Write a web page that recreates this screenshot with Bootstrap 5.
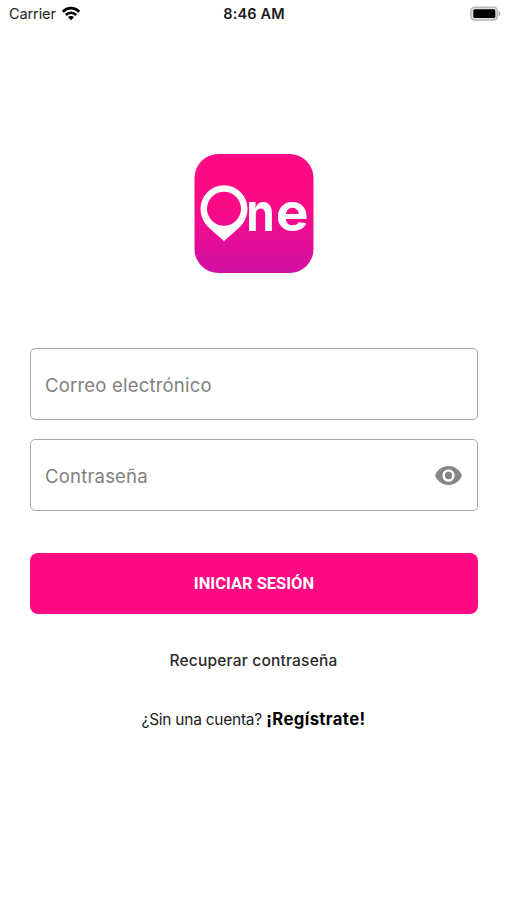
<!DOCTYPE html>
<html lang="es">
<head>
<meta charset="utf-8">
<meta name="viewport" content="width=device-width, initial-scale=1">
<title>Iniciar sesión</title>
<link href="https://cdn.jsdelivr.net/npm/bootstrap@5.3.0/dist/css/bootstrap.min.css" rel="stylesheet">
<style>
body{font-family:Inter,"Liberation Sans",sans-serif;background:#fff;color:#222;min-height:900px}
.status{height:28px;padding:0 6px 0 9px;line-height:28px;font-size:14.5px}
.status>div{flex:1 1 0}
.carrier{letter-spacing:-.1px}
.clock{font-weight:600;font-size:14.5px;color:#1a1a1a;letter-spacing:.15px;padding-right:2px}
.logo{margin-top:126px;height:119px}
.login{margin-top:75px;padding:0 29px 0 30px}
.field{height:72px;border:1.5px solid #aaa;border-radius:5px;margin-bottom:20px;padding:1px 15px 0 14px}
.field + .field{margin-top:-1px}
.field input{font-family:inherit;font-size:18.5px;letter-spacing:.2px;line-height:28px;background:transparent;color:#333}
.field input::placeholder{color:#808080;opacity:1}
.field input:focus{box-shadow:none;background:transparent}
.enter{height:61px;margin-top:42px;padding-top:8px;background:#ff0a82;border:0;border-radius:8px;color:#fff;font-family:Roboto,sans-serif;font-size:16.5px;font-weight:700}
.enter:hover{background:#e60975;color:#fff}
.recover{margin-top:35px;line-height:24px;font-size:15.5px;font-weight:500;color:#2b2b2b;letter-spacing:.2px}
.signup{margin-top:34px;line-height:24px;font-size:15.5px}
.signup a{color:#000;font-weight:700;font-size:16.75px;letter-spacing:.35px}
.signup span{letter-spacing:-.25px}
</style>
</head>
<body>
<header class="status d-flex align-items-center">
  <div class="d-flex align-items-center"><span class="carrier">Carrier</span>
    <svg class="ms-1" width="22" height="16" viewBox="-1 0 22 16"><g fill="none" stroke="#000" stroke-width="2.7"><path d="M1.800 5.700C6.500 .9 13.500 .9 18.200 5.700"/><path d="M4.800 9c3-3 7.400-3 10.400 0"/></g><path d="M6.900 11.100c1.800-1.600 4.400-1.600 6.200 0L10 14.200z"/></svg>
  </div>
  <div class="clock text-center">8:46 AM</div>
  <div class="d-flex justify-content-end"><svg width="31" height="16" viewBox="0 0 31 16"><rect x=".9" y="1.200" width="26.500" height="12.700" rx="3.500" fill="#ddd" stroke="#b8b8b8" stroke-width="1.500"/><rect x="3.300" y="3.300" width="22" height="8.800" rx="1.500"/><path d="M28.700 5.300c2.200 1 2.200 4 0 5z" fill="#aaa"/></svg></div>
</header>
<main>
  <div class="logo d-flex justify-content-center">
    <svg width="120" height="119" viewBox="0 0 120 119" role="img" aria-label="One">
      <defs><linearGradient id="brand" x1="0" y1="0" x2="0" y2="1"><stop offset="0" stop-color="#ff0a82"/><stop offset=".45" stop-color="#fb0a86"/><stop offset="1" stop-color="#cf10a6"/></linearGradient></defs>
      <rect x=".5" width="119" height="119" rx="24" fill="url(#brand)"/>
      <path fill="#fff" fill-rule="evenodd" d="M30 31.300a23.500 23.500 0 0 1 23.500 23.500c0 9-4.500 15.500-9.500 20L30 87 16 74.800C11 70.300 6.500 63.800 6.500 54.800A23.500 23.500 0 0 1 30 31.300zm0 6.500a17 17 0 1 0 0 34 17 17 0 0 0 0-34z"/>
      <g fill="#fff" font-family="Inter, sans-serif" font-weight="700" font-size="53"><text x="52.300" y="76.500" textLength="28.500" lengthAdjust="spacingAndGlyphs">n</text><text x="81.800" y="76.500" textLength="32.800" lengthAdjust="spacingAndGlyphs">e</text></g>
    </svg>
  </div>
  <form class="login">
    <div class="field d-flex align-items-center"><input class="form-control border-0 p-0" type="email" placeholder="Correo electrónico" aria-label="Correo electrónico"></div>
    <div class="field mb-0 d-flex align-items-center"><input class="form-control border-0 p-0" type="password" placeholder="Contraseña" aria-label="Contraseña">
      <svg class="flex-shrink-0" width="27" height="19" viewBox="1 4.500 22 15" preserveAspectRatio="none" fill="#858585"><path d="M12 4.500C7 4.500 2.730 7.610 1 12c1.730 4.390 6 7.500 11 7.500s9.270-3.110 11-7.500c-1.730-4.390-6-7.500-11-7.500zM12 17a5 5 0 1 1 0-10 5 5 0 0 1 0 10zm0-8a3 3 0 1 0 0 6 3 3 0 0 0 0-6z"/></svg>
    </div>
    <button class="enter btn w-100 d-block" type="button">INICIAR SESIÓN</button>
  </form>
  <div class="recover text-center"><a class="text-reset text-decoration-none" href="#">Recuperar contraseña</a></div>
  <div class="signup text-center"><span>¿Sin una cuenta?</span> <a class="text-decoration-none" href="#">¡Regístrate!</a></div>
</main>
<script src="https://cdn.jsdelivr.net/npm/bootstrap@5.3.0/dist/js/bootstrap.bundle.min.js"></script>
</body>
</html>
